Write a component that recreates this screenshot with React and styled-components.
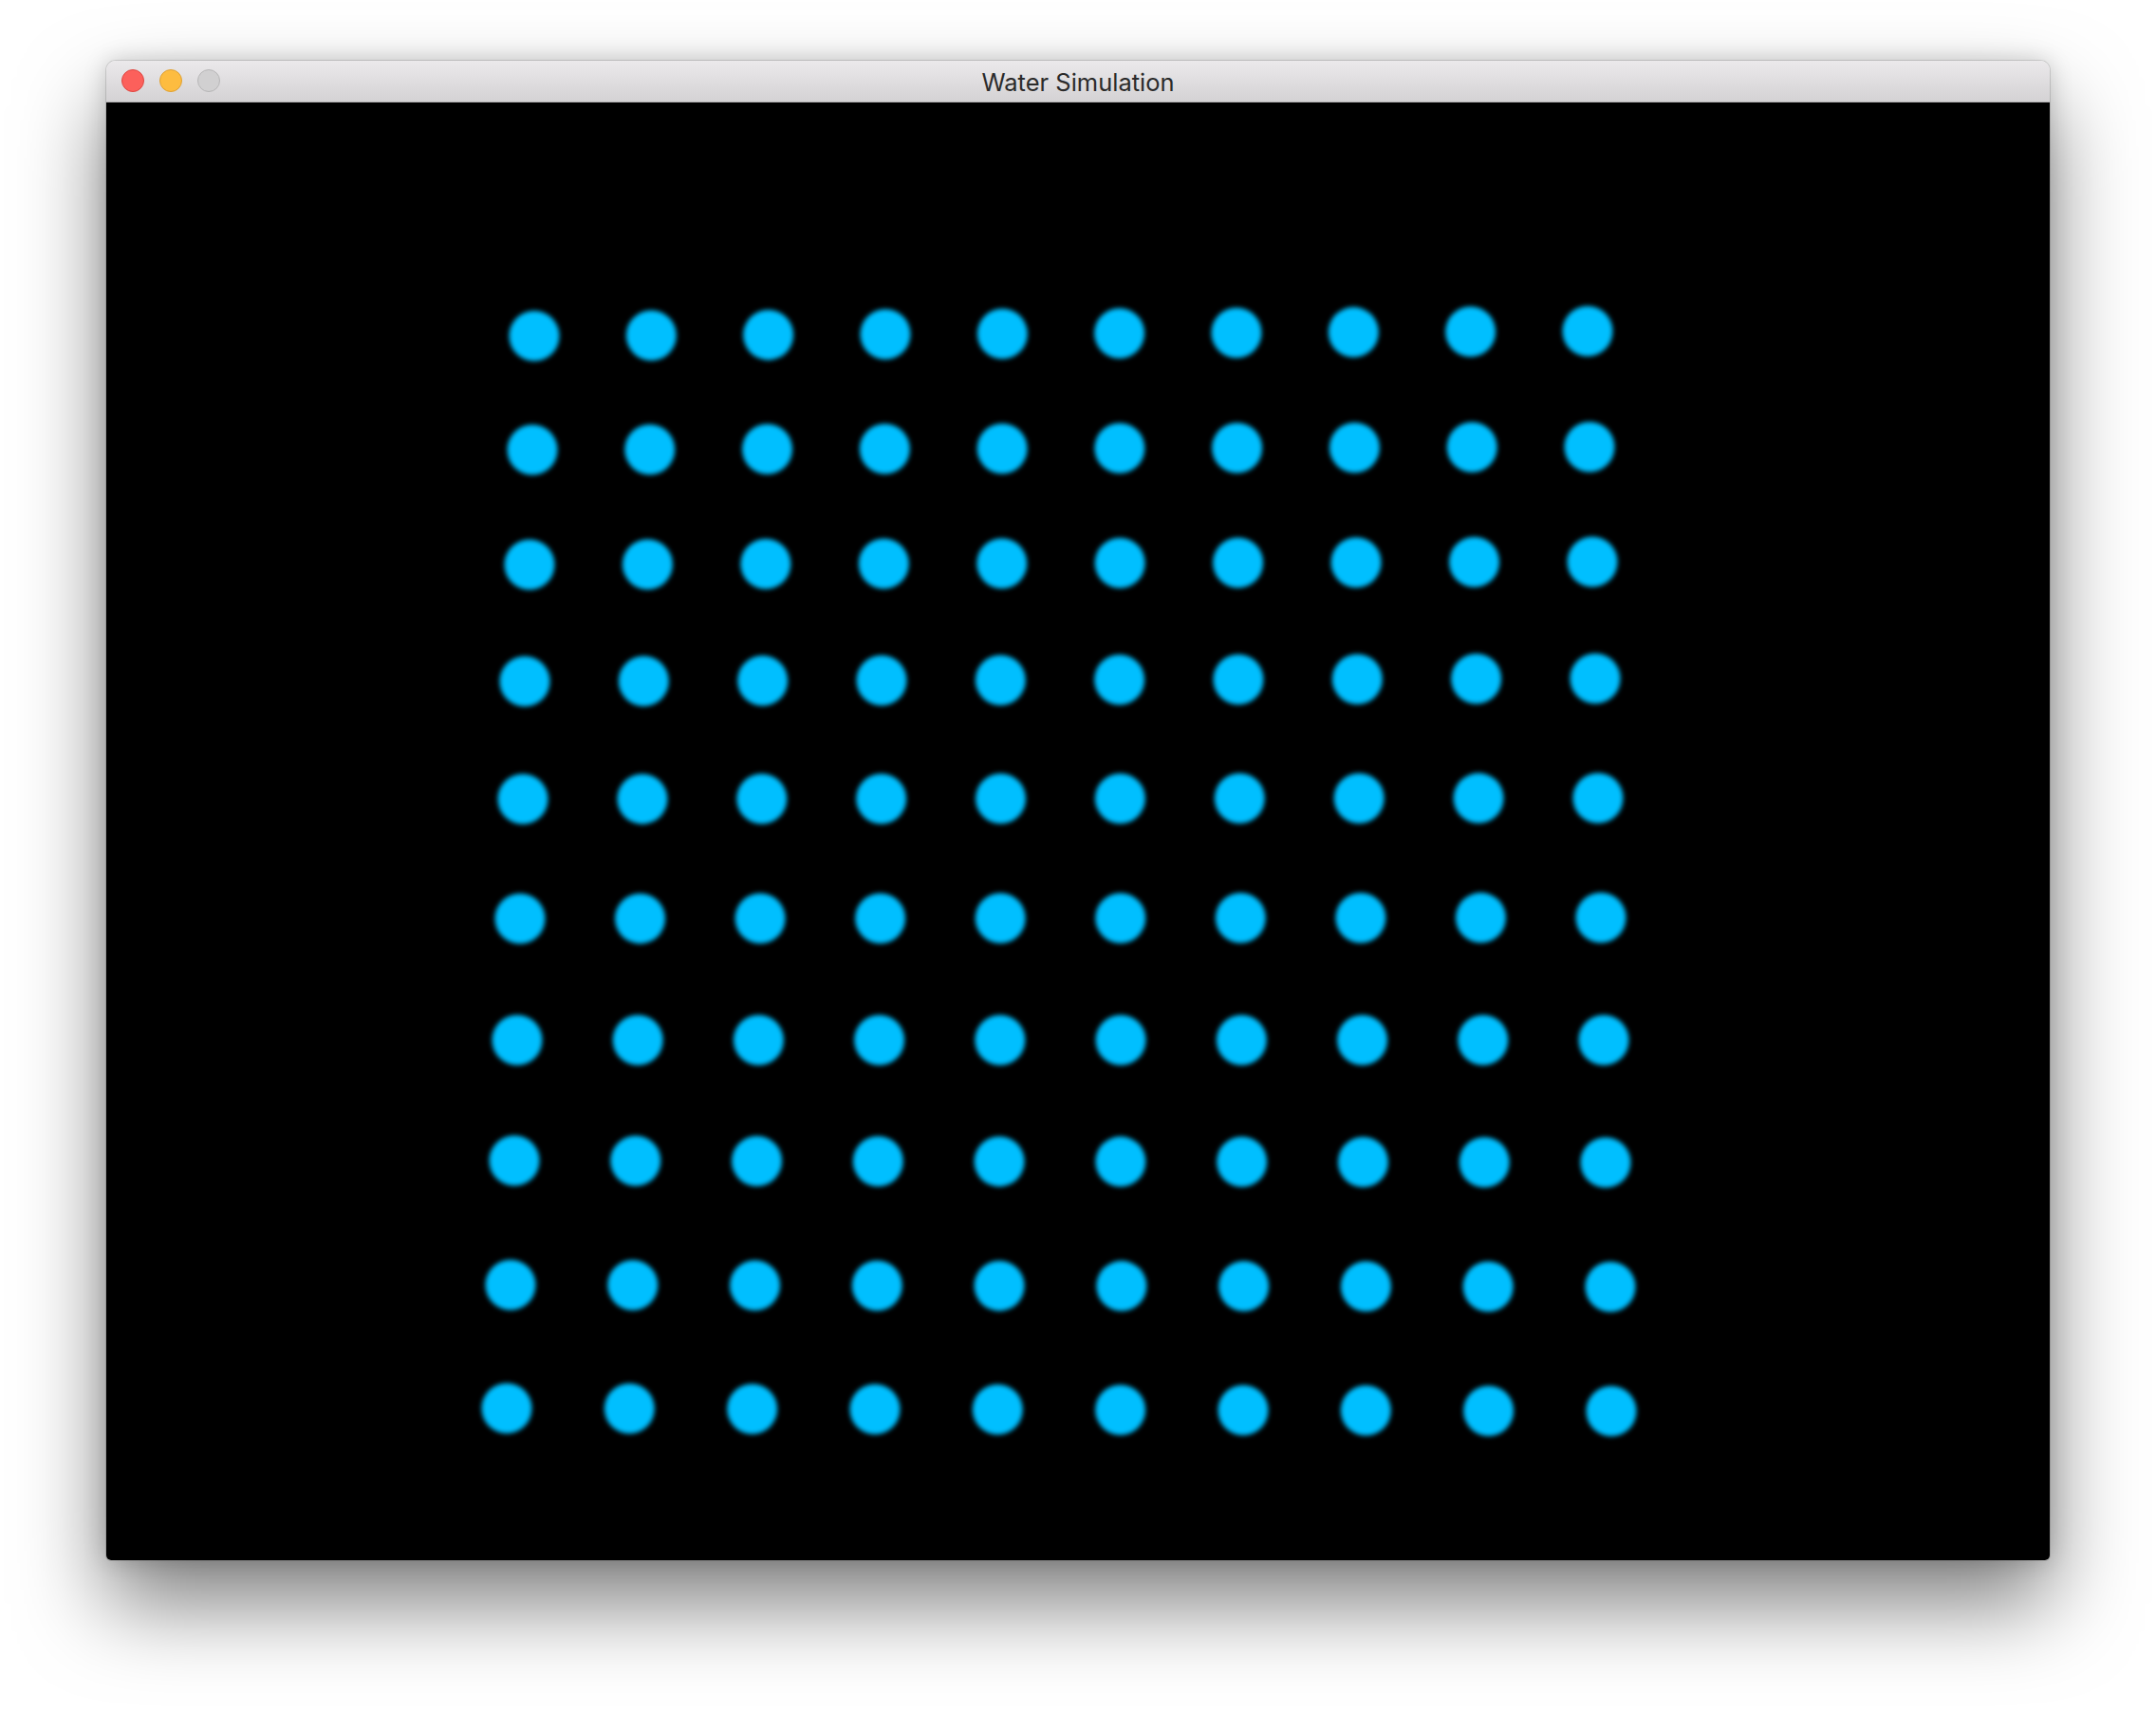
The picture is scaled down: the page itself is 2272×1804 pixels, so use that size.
import React from 'react';
import styled, { createGlobalStyle } from 'styled-components';

const GlobalStyle = createGlobalStyle`
  html, body {
    margin: 0;
    padding: 0;
    background: #ffffff;
  }
`;

const Page = styled.div`
  display: flex;
  justify-content: center;
  align-items: flex-start;
  width: 2272px;
  height: 1804px;
  padding-top: 64px;
  box-sizing: border-box;
  background: #ffffff;
  overflow: hidden;
`;

const Window = styled.div`
  display: flex;
  flex-direction: column;
  width: 2048px;
  border-radius: 10px 10px 5px 5px;
  overflow: hidden;
  box-shadow: 0 0 0 1px rgba(0, 0, 0, 0.12), 0 0 24px rgba(0, 0, 0, 0.18),
    0 46px 90px rgba(0, 0, 0, 0.5);
`;

const TitleBar = styled.div`
  position: relative;
  display: flex;
  align-items: center;
  justify-content: center;
  height: 44px;
  box-sizing: border-box;
  background: linear-gradient(#ebe9eb, #d4d2d4);
  border-bottom: 1px solid #b1afb1;
`;

const Lights = styled.div`
  position: absolute;
  left: 16px;
  top: 9px;
  display: flex;
  gap: 16px;
`;

const Light = styled.span`
  width: 24px;
  height: 24px;
  border-radius: 50%;
  box-sizing: border-box;
  background: ${(p) => p.fill};
  border: 1px solid ${(p) => p.edge};
`;

const Title = styled.span`
  padding-top: 2px;
  font-family: Inter, 'Liberation Sans', sans-serif;
  font-size: 25.5px;
  line-height: 30px;
  color: #2b2b2b;
`;

const Canvas = styled.div`
  display: flex;
  height: 1536px;
  background: #000000;
`;

// left / right ends of each row as [x, y] in canvas coordinates
const rows = [
  [[451, 246], [1561, 241]],
  [[449, 366], [1563, 363]],
  [[446, 487], [1566, 484]],
  [[441, 610], [1569, 607]],
  [[439, 734], [1572, 733]],
  [[436, 860], [1575, 859]],
  [[433, 988], [1578, 988]],
  [[430, 1115], [1580, 1117]],
  [[426, 1246], [1585, 1248]],
  [[422, 1376], [1586, 1379]],
];

const dots = rows.flatMap(([[x1, y1], [x2, y2]], r) =>
  Array.from({ length: 10 }, (_, c) => ({
    key: `${r}-${c}`,
    x: x1 + ((x2 - x1) * c) / 9,
    y: y1 + ((y2 - y1) * c) / 9,
  }))
);

const Particles = () => (
  <svg width="2048" height="1536" viewBox="0 0 2048 1536">
    <defs>
      <filter id="soft" x="-50%" y="-50%" width="200%" height="200%">
        <feGaussianBlur stdDeviation="2.8" />
      </filter>
    </defs>
    <g fill="#00bfff" filter="url(#soft)">
      {dots.map((d) => (
        <circle key={d.key} cx={d.x} cy={d.y} r="26.5" />
      ))}
    </g>
  </svg>
);

const App = () => (
  <>
    <GlobalStyle />
    <Page>
      <Window>
        <TitleBar>
          <Lights>
            <Light fill="#fc605b" edge="#de4641" />
            <Light fill="#fdbc40" edge="#dea034" />
            <Light fill="#d1d0d1" edge="#b7b6b7" />
          </Lights>
          <Title>Water Simulation</Title>
        </TitleBar>
        <Canvas>
          <Particles />
        </Canvas>
      </Window>
    </Page>
  </>
);

export default App;
